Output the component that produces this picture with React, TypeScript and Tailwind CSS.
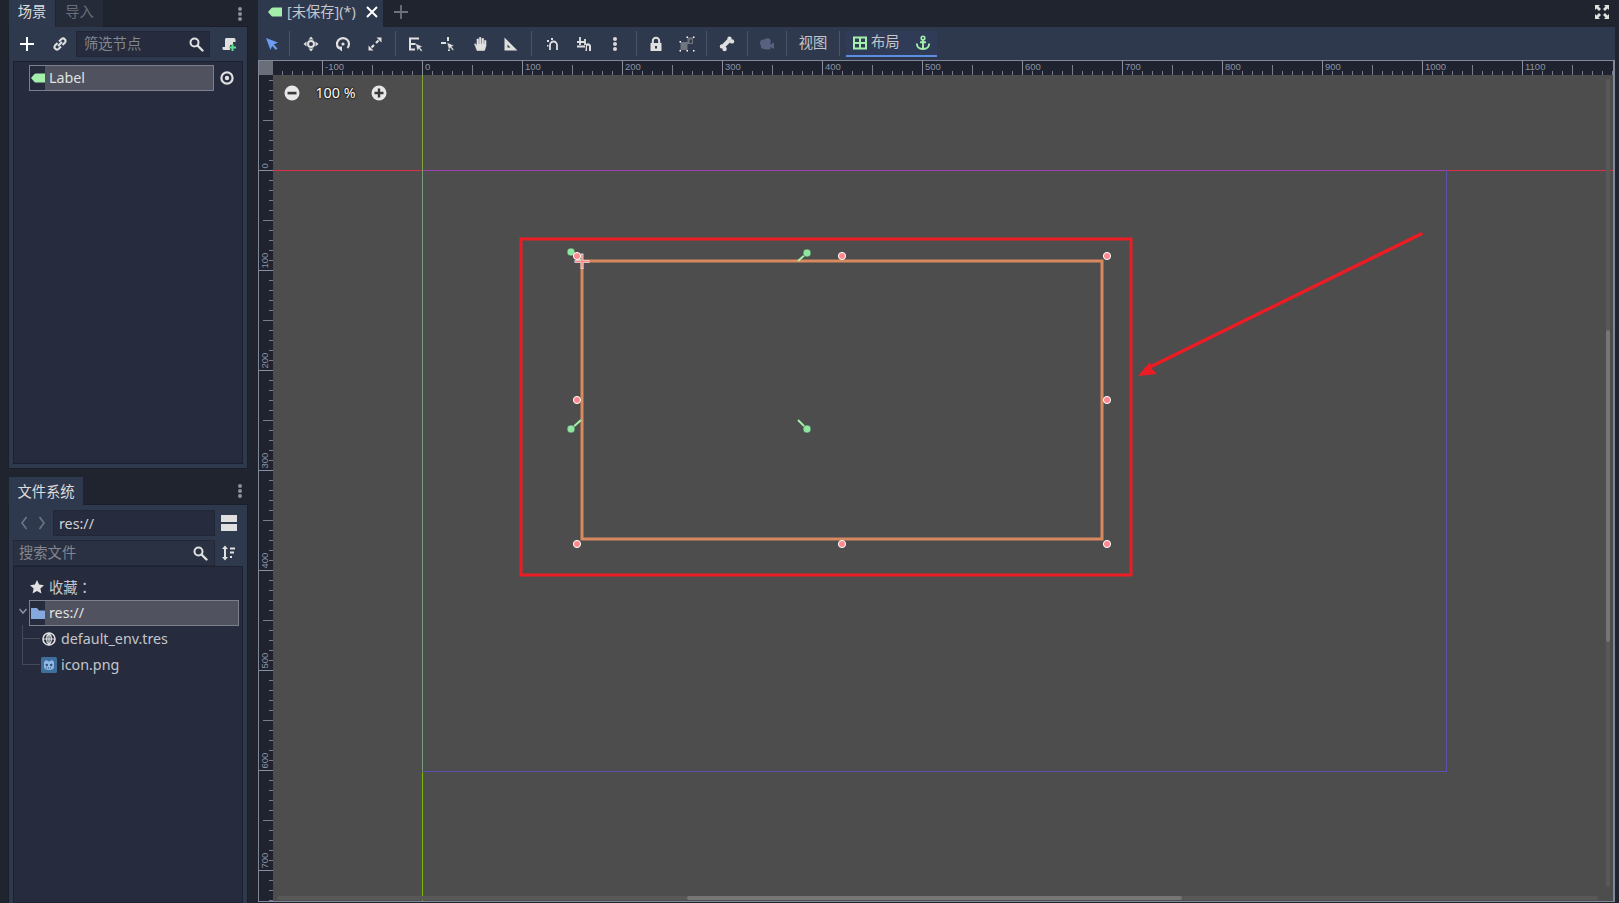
import type { ReactNode } from "react";

const ICON = "#e0e0e0";

const Ico = ({ size = 16, children, className = "" }: { size?: number; children: ReactNode; className?: string }) => (
  <svg width={size} height={size} viewBox="0 0 16 16" className={"block shrink-0 " + className}>
    {children}
  </svg>
);

const TagIcon = () => (
  <Ico>
    <path d="M1 8 L4.5 4 Q5 3.5 6 3.5 H15 V12.5 H6 Q5 12.5 4.5 12 Z" fill="#a5efac" />
  </Ico>
);

const Sep = () => <div className="w-px h-[25px] bg-[#4a5367]" />;

const ToolBtn = ({ w, children }: { w: number; children: ReactNode }) => (
  <div className="flex items-center justify-center h-full shrink-0" style={{ width: w }}>
    {children}
  </div>
);

const DotsV = ({ color = "#b5b8bf" }: { color?: string }) => (
  <Ico>
    <circle cx="8" cy="3" r="2" fill={color} />
    <circle cx="8" cy="8" r="2" fill={color} />
    <circle cx="8" cy="13" r="2" fill={color} />
  </Ico>
);

const SearchIcon = () => (
  <Ico>
    <circle cx="6.5" cy="6.5" r="4" fill="none" stroke={ICON} strokeWidth="2" />
    <path d="M9.5 9.5 L14.5 14.5" stroke={ICON} strokeWidth="2.4" strokeLinecap="round" />
  </Ico>
);

const Cursor = ({ x = 8, y = 7 }: { x?: number; y?: number }) => (
  <path
    transform={`translate(${x} ${y})`}
    d="M0 0 L7 3 L4.6 4.2 L7 7 L5.6 8 L3.4 5.2 L2 7.6 Z"
    fill={ICON}
    stroke="#323c51"
    strokeWidth="0.5"
  />
);

const ToolIcons = {
  select: (
    <Ico>
      <path d="M2 2 L14 6.5 L9.8 8.6 L13.5 12.5 L11.8 14 L8.2 10 L6.5 14 Z" fill="#6b9cf0" />
    </Ico>
  ),
  move: (
    <Ico>
      <circle cx="8" cy="8" r="3" fill="none" stroke={ICON} strokeWidth="2" />
      <path d="M8 0.5 L10.5 3.5 H5.5 Z M8 15.5 L10.5 12.5 H5.5 Z M0.5 8 L3.5 5.5 V10.5 Z M15.5 8 L12.5 5.5 V10.5 Z" fill={ICON} />
    </Ico>
  ),
  rotate: (
    <Ico>
      <path d="M4 12.5 A6 6 0 1 1 12.5 12" fill="none" stroke={ICON} strokeWidth="2.2" />
      <path d="M1 10.5 H7 V15.5 Z" fill={ICON} />
      <circle cx="8" cy="8" r="1.6" fill={ICON} />
    </Ico>
  ),
  scale: (
    <Ico>
      <path d="M9.5 1.5 H14.5 V6.5 Z M1.5 9.5 V14.5 H6.5 Z" fill={ICON} />
      <path d="M11.5 4.5 L9 7 M4.5 11.5 L7 9" stroke={ICON} strokeWidth="2.2" />
    </Ico>
  ),
  listSelect: (
    <Ico>
      <path d="M2 2.5 H12 M3 2.5 V13.5 M2 13.5 H8 M3 8 H9" stroke={ICON} strokeWidth="2" fill="none" />
      <Cursor x={8.5} y={7.5} />
    </Ico>
  ),
  pivot: (
    <Ico>
      <path d="M1 7 H6 M8 1 V5 M9 13 V15" stroke={ICON} strokeWidth="2" fill="none" />
      <Cursor x={7} y={6.5} />
    </Ico>
  ),
  pan: (
    <Ico>
      <path d="M3 9 L5 14.5 H12.5 L14 10 V4.5 H12.5 V8 H11.6 V2.5 H10 V8 H9 V1.5 H7.4 V8 H6.5 V3 H5 V10 L3.6 7.8 L2.4 8.2 Z" fill={ICON} stroke={ICON} strokeWidth="0.6" />
    </Ico>
  ),
  ruler: (
    <Ico>
      <path fillRule="evenodd" d="M1.5 1.5 L14.5 14.5 H1.5 Z M4.5 8.5 V11.5 H7.5 Z" fill={ICON} />
    </Ico>
  ),
  snap: (
    <Ico>
      <path d="M5 14 V9 A3.5 3.5 0 0 1 12 9 V14" fill="none" stroke={ICON} strokeWidth="1.8" />
      <path d="M2 4 H4 V6 H2 Z M6 2 H8 V4 H6 Z M2 9 H3.5 V10.5 H2 Z" fill={ICON} />
    </Ico>
  ),
  grid: (
    <Ico>
      <path d="M1 6 H9 M1 10.5 H9 M4 1 V9 M9 3 V9" stroke={ICON} strokeWidth="1.8" fill="none" />
      <path d="M10 8 A3 3 0 0 1 15 10 V15 H13 V10.5 A1 1 0 0 0 11 10.5 V15 H9.5 Z" fill={ICON} />
    </Ico>
  ),
  lock: (
    <Ico>
      <path d="M4.8 7 V5 A3.2 3.2 0 0 1 11.2 5 V7" fill="none" stroke={ICON} strokeWidth="2" />
      <path fillRule="evenodd" d="M2.5 7 H13.5 V15 H2.5 Z M7 10 V12.5 H9 V10 Z" fill={ICON} />
    </Ico>
  ),
  group: (
    <Ico>
      <path d="M1.5 6 H8.5 V1.5 H14 V8 H8.5 V14 H1.5 Z" fill="#70757f" />
      <path d="M0.5 5 H2 V6.5 H0.5 Z M7.5 0.5 H9 V2 H7.5 Z M14 0.5 H15.5 V2 H14 Z M14 14 H15.5 V15.5 H14 Z M0.5 14 H2 V15.5 H0.5 Z M7.5 14 H9 V15.5 H7.5 Z" fill="#fff" />
      <path d="M10.5 3.5 H13 V7 H10.5 Z" fill="#323c51" />
    </Ico>
  ),
  bone: (
    <Ico>
      <path d="M4.5 10 L10 4.5" stroke={ICON} strokeWidth="4" />
      <circle cx="10.5" cy="2.8" r="2.2" fill={ICON} />
      <circle cx="13" cy="5.4" r="2.2" fill={ICON} />
      <circle cx="3" cy="10.4" r="2.2" fill={ICON} />
      <circle cx="5.6" cy="13" r="2.2" fill={ICON} />
    </Ico>
  ),
  camera: (
    <Ico>
      <circle cx="4.6" cy="7" r="3.6" fill="#56627f" />
      <circle cx="8.4" cy="5.6" r="3.4" fill="#56627f" />
      <path d="M2 8 H11.5 V13 Q7 14.5 2 12 Z M11.5 8.5 L15 6.5 V13 L11.5 11 Z" fill="#56627f" />
    </Ico>
  ),
  anchor: (
    <Ico>
      <circle cx="8" cy="3" r="1.8" fill="none" stroke="#a5efac" strokeWidth="1.6" />
      <path d="M8 5 V14 M5 7.2 H11 M1.8 8.5 Q2 14 8 14 Q14 14 14.2 8.5" fill="none" stroke="#a5efac" strokeWidth="1.9" />
    </Ico>
  ),
  table: (
    <Ico>
      <path fillRule="evenodd" d="M1 1.5 H15 V14.5 H1 Z M3 3.5 V7 H7 V3.5 Z M9 3.5 V7 H13 V3.5 Z M3 9 V12.5 H7 V9 Z M9 9 V12.5 H13 V9 Z" fill="#a5efac" />
    </Ico>
  ),
};

const Ruler = () => {
  const h: ReactNode[] = [];
  for (let v = -140; v <= 1190; v += 10) {
    const x = 422.5 + v;
    const major = v % 100 === 0;
    const mid = v % 50 === 0;
    h.push(
      <line key={"h" + v} x1={x} x2={x} y1={major ? 0 : mid ? 4 : 10} y2={14} stroke={major ? "#8a90a0" : "#767d8e"} />
    );
    if (major)
      h.push(
        <text key={"t" + v} x={x + 2.5} y={9} fontSize="9.5" fill="#8d93a2" fontFamily="Liberation Sans, sans-serif">
          {v}
        </text>
      );
  }
  const w: ReactNode[] = [];
  for (let v = -90; v <= 730; v += 10) {
    const y = 170.5 + v;
    const major = v % 100 === 0;
    const mid = v % 50 === 0;
    w.push(<line key={"v" + v} y1={y} y2={y} x1={major ? 0 : mid ? 4 : 10} x2={14} stroke={major ? "#8a90a0" : "#767d8e"} />);
    if (major && v >= 0)
      w.push(
        <text
          key={"l" + v}
          transform={`translate(9 ${y - 2}) rotate(-90)`}
          fontSize="9.5"
          fill="#8d93a2"
          fontFamily="Liberation Sans, sans-serif"
        >
          {v}
        </text>
      );
  }
  return (
    <>
      <div className="h-[14px] flex shrink-0">
        <div className="w-[14px] bg-[#6a6e78]" />
        <svg width="1340" height="14" viewBox="273 0 1340 14" className="block bg-[#1f2330]">
          {h}
        </svg>
      </div>
      <div className="flex-1 flex min-h-0">
        <svg width="14" height="826" viewBox="0 75 14 826" className="block bg-[#1f2330] shrink-0">
          {w}
        </svg>
        <Stage />
      </div>
    </>
  );
};

const handles: [number, number][] = [
  [577, 256], [842, 256], [1107, 256], [577, 400], [1107, 400], [577, 544], [842, 544], [1107, 544],
];

const pins: [number, number, number, number][] = [
  [571, 252, 581, 261],
  [807, 253, 798, 261],
  [571, 429, 581, 420],
  [807, 429, 798, 420],
];

const Stage = () => (
  <div className="relative flex-1 bg-[#4d4d4d] overflow-hidden">
    {/* canvas drawn in page coordinates, shifted by the viewport origin */}
    <svg width="1340" height="826" viewBox="273 75 1340 826" className="absolute inset-0">
      <line x1="273" x2="422" y1="170.5" y2="170.5" stroke="#dc3048" />
      <line x1="422" x2="1446" y1="170.5" y2="170.5" stroke="#a040b0" />
      <line x1="1446" x2="1613" y1="170.5" y2="170.5" stroke="#dc3048" />
      <line x1="422.5" x2="422.5" y1="75" y2="170" stroke="#7fa63a" />
      <line x1="422.5" x2="422.5" y1="170" y2="771" stroke="#7a9a7a" />
      <line x1="422.5" x2="422.5" y1="771" y2="901" stroke="#7fb800" />
      <path d="M1446.5 170 V771.5 H422" fill="none" stroke="#5c50b0" />

      <rect x="582" y="261" width="520" height="278" fill="none" stroke="#d9895f" strokeWidth="3" />
      <rect x="521" y="239" width="610" height="336" fill="none" stroke="#ec1c24" strokeWidth="3" />

      <path d="M1421 234 L1146 369" stroke="#ec1c24" strokeWidth="3.5" strokeLinecap="round" />
      <path d="M1138 376 L1150 362 L1152 369 L1157 374 Z" fill="#ec1c24" />

      {pins.map(([x, y, ax, ay]) => (
        <g key={x + "-" + y}>
          <path d={`M${ax} ${ay} L${x} ${y}`} stroke="#a5efac" strokeWidth="2" />
          <circle cx={x} cy={y} r="4" fill="#8fe6a0" stroke="#3a3a3a" strokeWidth="0.5" />
        </g>
      ))}

      <path d="M574.5 261.5 H589.5 M582 253.5 V269" stroke="#e8e8e8" strokeWidth="3" strokeOpacity="0.85" />
      <path d="M575 261.5 H589 M582 255 V268" stroke="#ff8a8a" strokeWidth="1.4" />

      {handles.map(([x, y]) => (
        <circle key={x + "-" + y} cx={x} cy={y} r="3.6" fill="#ff8a8e" stroke="#fff" strokeWidth="1" />
      ))}
    </svg>

    <div className="absolute left-[11px] top-[10px] h-4 flex items-center text-white [text-shadow:0_0_2px_#000,0_0_2px_#000]">
      <svg width="16" height="16" viewBox="0 0 16 16" className="block">
        <circle cx="8" cy="8" r="7.5" fill="#e8e8e8" />
        <rect x="3.5" y="6.8" width="9" height="2.6" fill="#3a3a3a" />
      </svg>
      <span className="w-[71px] text-center leading-4">100 %</span>
      <svg width="16" height="16" viewBox="0 0 16 16" className="block">
        <circle cx="8" cy="8" r="7.5" fill="#e8e8e8" />
        <path d="M3.5 6.8 H6.8 V3.5 H9.2 V6.8 H12.5 V9.2 H9.2 V12.5 H6.8 V9.2 H3.5 Z" fill="#3a3a3a" />
      </svg>
    </div>

    {/* scrollbars */}
    <div className="absolute left-[1333px] top-[4px] w-[4px] bottom-[14px] bg-[#585858] rounded-full">
      <div className="absolute left-0 right-0 top-[251px] h-[312px] bg-[#767676] rounded-full" />
    </div>
    <div className="absolute left-[4px] bottom-[1px] h-[4px] w-[1321px] bg-[#585858] rounded-full">
      <div className="absolute top-0 bottom-0 left-[410px] w-[495px] bg-[#767676] rounded-full" />
    </div>
  </div>
);

const DockRow = ({
  indent,
  selected,
  icon,
  label,
}: {
  indent: number;
  selected?: boolean;
  icon: ReactNode;
  label: string;
}) => (
  <div className="h-[26px] flex items-center" style={{ marginLeft: indent }}>
    {selected ? (
      <div className="flex-1 h-[26px] flex items-center border border-[#7c808c] bg-[#50535f]">
        <div className="w-[15px] h-full bg-[#262c3d] flex items-center justify-center shrink-0">{icon}</div>
        <span className="ml-[4px] mt-px text-[#e0e0e0]">{label}</span>
      </div>
    ) : (
      <>
        <div className="w-4 flex items-center justify-center shrink-0">{icon}</div>
        <span className="ml-[4px] mt-px text-[#c4c6cb]">{label}</span>
      </>
    )}
  </div>
);

const SceneDock = () => (
  <div className="h-[468px] flex flex-col">
    <div className="h-[27px] flex relative shrink-0">
      <div className="w-[46px] bg-[#2f394d] flex items-center justify-center pb-[3px] text-[#dcdcdc]">场景</div>
      <div className="ml-px w-[47px] bg-[#262b3a] flex items-center justify-center pb-[3px] text-[#686d79]">导入</div>
      <div className="ml-auto mr-[-1px] self-center">
        <DotsV color="#8c909a" />
      </div>
    </div>
    <div className="flex-1 bg-[#2f394d] outline-1 outline-[#1b1f2b] flex flex-col px-[4px] pb-[4px] min-h-0">
      <div className="h-[34px] flex items-center shrink-0">
        <div className="w-[28px] flex justify-center">
          <Ico>
            <path d="M1 8 H15 M8 1 V15" stroke="#fff" strokeWidth="2" />
          </Ico>
        </div>
        <div className="w-[33px] ml-[2px] flex justify-center">
          <Ico>
            <path d="M7 5.5 L9.5 3 A2.5 2.5 0 0 1 13 6.5 L10.5 9 M9 10.5 L6.5 13 A2.5 2.5 0 0 1 3 9.5 L5.5 7 M6 10 L10 6" fill="none" stroke={ICON} strokeWidth="2" />
          </Ico>
        </div>
        <div className="w-[134px] h-[26px] bg-[#262c3d] border border-[#222738] flex items-center pl-[7px] pr-[5px] justify-between">
          <span className="text-[#83878f]">筛选节点</span>
          <SearchIcon />
        </div>
        <div className="ml-[11px]">
          <Ico>
            <path d="M5 2 H13 Q14.5 2 14.5 4 V6 H12 V9 H9 V14 H3 Q1.5 14 1.5 12.5 V11 H4 V4 Q4 2 5 2 Z" fill={ICON} />
            <path d="M8 11.5 H15 M11.5 8 V15" stroke="#5fe08a" strokeWidth="2" />
          </Ico>
        </div>
      </div>
      <div className="flex-1 bg-[#262c3d] border border-[#1c2130] pt-[3px] pl-[15px] pr-[28px] relative">
        <DockRow indent={0} selected icon={<TagIcon />} label="Label" />
        <div className="absolute right-[7px] top-[8px]">
          <Ico>
            <circle cx="8" cy="8" r="5.6" fill="none" stroke={ICON} strokeWidth="2.2" />
            <circle cx="8" cy="8" r="2.2" fill={ICON} />
          </Ico>
        </div>
      </div>
    </div>
  </div>
);

const FileDock = () => (
  <div className="flex-1 flex flex-col mt-[9px] min-h-0">
    <div className="h-[28px] flex relative shrink-0">
      <div className="w-[74px] bg-[#2f394d] flex items-center justify-center pt-[2px] text-[#dcdcdc]">文件系统</div>
      <div className="ml-auto mr-[-1px] self-center">
        <DotsV color="#8c909a" />
      </div>
    </div>
    <div className="flex-1 bg-[#2f394d] outline-1 outline-[#1b1f2b] flex flex-col px-[4px] min-h-0">
      <div className="h-[31px] pt-[5px] flex items-start shrink-0">
        <div className="w-[40px] h-[26px] flex items-center justify-around px-[2px]">
          <svg width="8" height="14" viewBox="0 0 8 14" className="block">
            <path d="M6.5 1 L2 7 L6.5 13" fill="none" stroke="#6e7482" strokeWidth="1.6" />
          </svg>
          <svg width="8" height="14" viewBox="0 0 8 14" className="block">
            <path d="M1.5 1 L6 7 L1.5 13" fill="none" stroke="#6e7482" strokeWidth="1.6" />
          </svg>
        </div>
        <div className="w-[162px] h-[26px] bg-[#262c3d] border border-[#222738] flex items-center pl-[5px] pt-[2px] text-[#d0d2d6]">res://</div>
        <div className="ml-[6px] mt-[5px] w-4 flex flex-col gap-[2px]">
          <div className="h-[7px] bg-[#e0e0e0]" />
          <div className="h-[7px] bg-[#e0e0e0]" />
        </div>
      </div>
      <div className="h-[30px] pt-[4px] flex items-start shrink-0">
        <div className="w-[202px] h-[26px] bg-[#2a3143] border border-[#232838] flex items-center pl-[5px] pr-[6px] justify-between">
          <span className="text-[#83878f] mt-px">搜索文件</span>
          <SearchIcon />
        </div>
        <div className="ml-[5px] mt-[5px]">
          <Ico>
            <path d="M5 2 V14" stroke={ICON} strokeWidth="2" />
            <path d="M5 0.5 L8 4 H2 Z M5 15.5 L8 12 H2 Z M10 2.5 H15 V4.5 H10 Z M10 6.5 H14 V8.5 H10 Z M10 11 H12 V13 H10 Z" fill={ICON} />
          </Ico>
        </div>
      </div>
      <div className="flex-1 bg-[#262c3d] border border-[#1c2130] relative pt-[7px] pr-[3px]">
        <div className="h-[26px] ml-[15px] flex items-center">
          <div className="w-[16px] flex justify-center">
            <Ico>
              <path d="M8 1 L10.1 5.6 L15 6.2 L11.4 9.6 L12.4 14.6 L8 12.1 L3.6 14.6 L4.6 9.6 L1 6.2 L5.9 5.6 Z" fill={ICON} />
            </Ico>
          </div>
          <span className="ml-[4px] mt-px text-[#c4c6cb] font-['Noto_Sans_CJK_TC','Noto_Sans_CJK_SC',sans-serif]">收藏：</span>
        </div>
        <DockRow
          indent={15}
          selected
          icon={
            <Ico>
              <path d="M1 3 H7 L9 5.5 H15 V14 H1 Z" fill="#85a9dd" />
            </Ico>
          }
          label="res://"
        />
        <div className="absolute left-[4px] top-[39px]">
          <svg width="10" height="10" viewBox="0 0 10 10" className="block">
            <path d="M1.5 3 L5 7 L8.5 3" fill="none" stroke="#8a909c" strokeWidth="1.5" />
          </svg>
        </div>
        {/* tree guide lines */}
        <div className="absolute left-[8px] top-[58px] w-[18px] h-[14px] border-l border-b border-[#434957]" />
        <div className="absolute left-[8px] top-[72px] w-[18px] h-[26px] border-l border-b border-[#434957]" />
        <DockRow
          indent={27}
          icon={
            <Ico>
              <circle cx="8" cy="8" r="6" fill="none" stroke={ICON} strokeWidth="1.6" />
              <path d="M2 8 H14 M8 2 V14 M8 2 Q3 8 8 14 M8 2 Q13 8 8 14" fill="none" stroke={ICON} strokeWidth="1.2" />
            </Ico>
          }
          label="default_env.tres"
        />
        <DockRow
          indent={27}
          icon={
            <Ico>
              <rect x="0" y="0" width="16" height="16" rx="1.5" fill="#3f6f9c" />
              <path d="M3 5 L5 3 L8 4.4 L11 3 L13 5 V10 Q13 13 8 13 Q3 13 3 10 Z" fill="#8fb8e4" />
              <circle cx="5.8" cy="8" r="1.2" fill="#2d4f78" />
              <circle cx="10.2" cy="8" r="1.2" fill="#2d4f78" />
              <path d="M5 11 H11" stroke="#2d4f78" strokeWidth="1" strokeDasharray="1 1" />
            </Ico>
          }
          label="icon.png"
        />
      </div>
    </div>
  </div>
);

export default function App() {
  return (
    <div className="w-[1619px] h-[903px] flex bg-[#20242f] overflow-hidden text-[14.3px] leading-none font-['Noto_Sans','Noto_Sans_CJK_SC',sans-serif]">
      <aside className="w-[258px] shrink-0 flex flex-col pl-[9px] pr-[11px]">
        <SceneDock />
        <FileDock />
      </aside>

      <main className="flex-1 flex flex-col min-w-0 pr-[4px]">
        <div className="h-[27px] flex items-center shrink-0 relative">
          <div className="w-[125px] h-full bg-[#2f394d] flex items-center pl-[9px] pb-[3px]">
            <TagIcon />
            <span className="ml-[4px] w-[76px] text-[#c4c6cb] whitespace-nowrap">[未保存](*)</span>
            <svg width="12" height="12" viewBox="0 0 12 12" className="block ml-[3px]">
              <path d="M1 1 L11 11 M11 1 L1 11" stroke="#fff" strokeWidth="2" />
            </svg>
          </div>
          <div className="ml-[10px] mb-[3px]">
            <Ico>
              <path d="M1 8 H15 M8 1 V15" stroke="#6c7280" strokeWidth="1.8" />
            </Ico>
          </div>
          <div className="ml-auto mr-[5px] mb-[3px]">
            <Ico>
              <path d="M1 1 H6 L4.5 2.5 L7 5 L5 7 L2.5 4.5 L1 6 Z M15 1 V6 L13.5 4.5 L11 7 L9 5 L11.5 2.5 L10 1 Z M1 15 V10 L2.5 11.5 L5 9 L7 11 L4.5 13.5 L6 15 Z M15 15 H10 L11.5 13.5 L9 11 L11 9 L13.5 11.5 L15 10 Z" fill={ICON} />
            </Ico>
          </div>
        </div>

        <div className="h-[33px] bg-[#2f394d] flex items-center shrink-0 pl-[6px]">
          <ToolBtn w={16}>{ToolIcons.select}</ToolBtn>
          <div className="w-[9px]" />
          <Sep />
          <ToolBtn w={41}>{ToolIcons.move}</ToolBtn>
          <ToolBtn w={24}>{ToolIcons.rotate}</ToolBtn>
          <ToolBtn w={40}>{ToolIcons.scale}</ToolBtn>
          <Sep />
          <ToolBtn w={37}>{ToolIcons.listSelect}</ToolBtn>
          <ToolBtn w={30}>{ToolIcons.pivot}</ToolBtn>
          <ToolBtn w={33}>{ToolIcons.pan}</ToolBtn>
          <ToolBtn w={30}>{ToolIcons.ruler}</ToolBtn>
          <div className="w-[5px]" />
          <Sep />
          <ToolBtn w={41}>{ToolIcons.snap}</ToolBtn>
          <ToolBtn w={21}>{ToolIcons.grid}</ToolBtn>
          <ToolBtn w={42}>
            <DotsV color="#d8d8d8" />
          </ToolBtn>
          <Sep />
          <ToolBtn w={38}>{ToolIcons.lock}</ToolBtn>
          <ToolBtn w={24}>{ToolIcons.group}</ToolBtn>
          <div className="w-[7px]" />
          <Sep />
          <ToolBtn w={40}>{ToolIcons.bone}</ToolBtn>
          <Sep />
          <ToolBtn w={38}>{ToolIcons.camera}</ToolBtn>
          <Sep />
          <ToolBtn w={52}>
            <span className="text-[#c4c6cb]">视图</span>
          </ToolBtn>
          <Sep />
          <div className="ml-[6px] w-[91px] h-[26px] bg-[#2f3b57] border-b-2 border-[#5c8de0] flex items-center pl-[6px]">
            {ToolIcons.table}
            <span className="ml-[3px] text-[#c4c6cb]">布局</span>
            <span className="ml-[15px]">{ToolIcons.anchor}</span>
          </div>
        </div>

        <div className="flex-1 flex flex-col min-h-0 border-t border-l border-b border-r-2 border-[#7f8798] mb-[1px]">
          <Ruler />
        </div>
      </main>
    </div>
  );
}
